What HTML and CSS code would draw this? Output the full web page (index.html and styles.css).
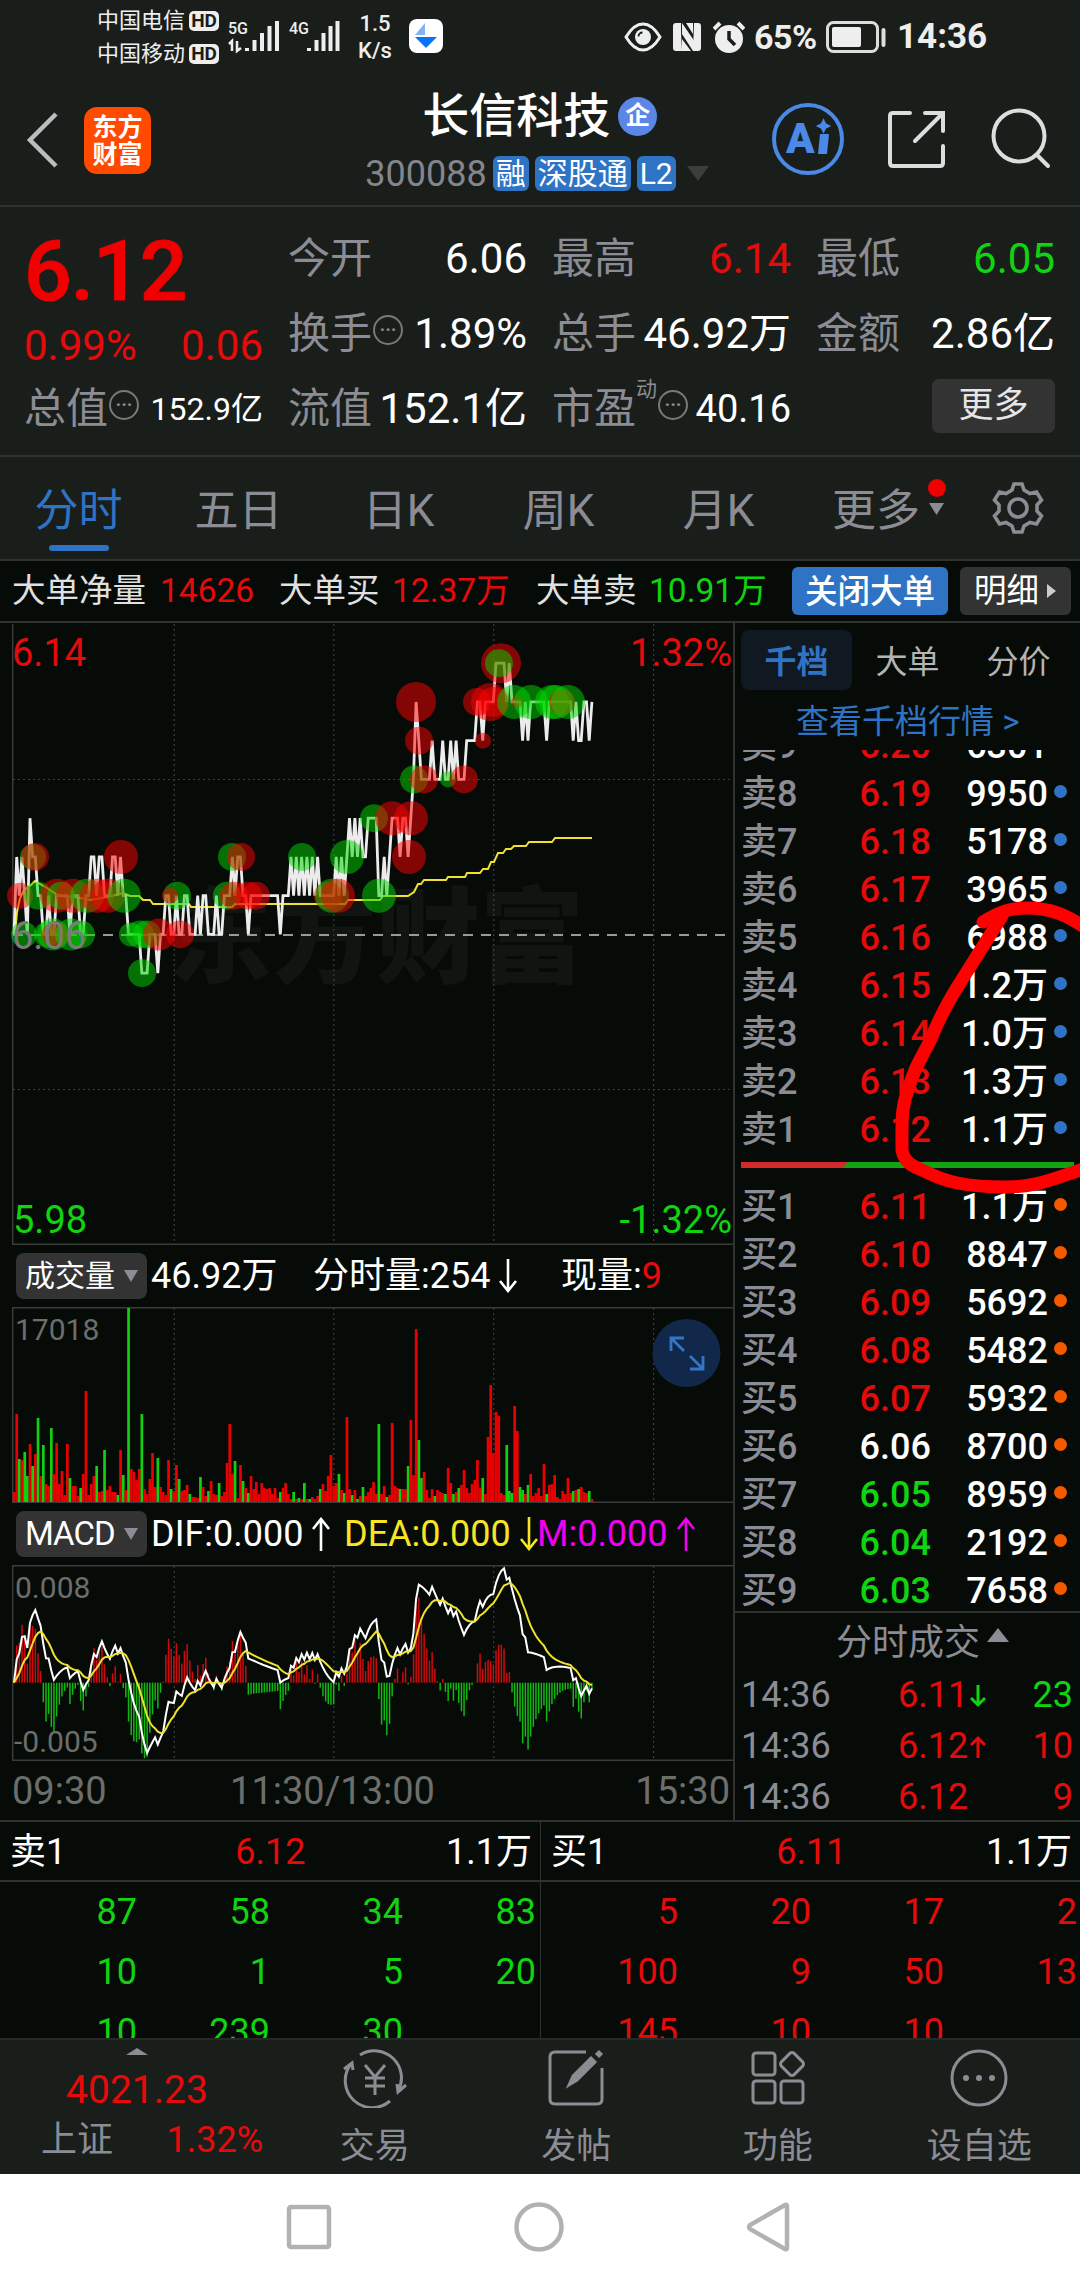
FILE: index.html
```html
<!DOCTYPE html>
<html lang="zh-CN">
<head>
    <meta charset="UTF-8">
    <meta name="viewport" content="width=device-width, initial-scale=1.0">
    <title>长信科技 300088</title>
    <link rel="stylesheet" href="styles.css">
</head>
<body>
<div class="phone">

    <div class="status-bar">
        <div class="carriers">
            <div class="carrier">中国电信<span class="hd">HD</span></div>
            <div class="carrier">中国移动<span class="hd">HD</span></div>
        </div>
        <svg class="signals" width="116" height="40" viewBox="228 18 116 40">
            <text x="228" y="34" class="net">5G</text>
            <text x="289" y="34" class="net">4G</text>
            <path class="sig" d="M247 51v-3M254.500 51v-11M262 51v-18M269.500 51v-25M277 51v-30"/>
            <path class="sig" d="M309 51v-3M316.500 51v-11M323.500 51v-18M330.500 51v-25M337.500 51v-30"/>
            <path class="updown" d="M229 44l3-3v10M237 41v10l4-3"/>
        </svg>
        <div class="speed"><span>1.5</span><span>K/s</span></div>
        <svg class="app-dot" width="34" height="34" viewBox="0 0 34 34">
            <rect width="34" height="34" rx="8" fill="#fff"/>
            <path d="M16 4v12H6z" fill="#7fb4f5"/>
            <path d="M6 18h22L17 29z" fill="#0a73f5"/>
        </svg>
        <div class="status-right">
            <svg width="38" height="30" viewBox="0 0 38 30">
                <path d="M2 15C8 5 14 2 19 2s11 3 17 13c-6 10-12 13-17 13S8 25 2 15z" fill="none" stroke="#eee" stroke-width="3"/>
                <circle cx="19" cy="15" r="8" fill="#eee"/>
                <path d="M14.500 14.500a4 4 0 0 1 4-4" stroke="#1a1e1b" stroke-width="1.800" fill="none"/>
            </svg>
            <svg class="nfc" width="29" height="28" viewBox="0 0 29 28">
                <path d="M3 0h5v9l1 19H3q-3 0-3-3V3q0-3 3-3zM21 0h4q3 0 3 3v22q0 3-3 3h-5z" fill="#eee"/>
                <path d="M9 0l13 19v9h-2L9 11zM9 16l9 12H9zM13 0h7v11z" fill="#eee"/>
            </svg>
            <svg class="alarm" width="32" height="32" viewBox="0 0 32 32">
                <circle cx="16" cy="18" r="14" fill="#eee"/>
                <path d="M1 8l6-6M31 8l-6-6" stroke="#eee" stroke-width="4"/>
                <path d="M16 10v8l6 6" stroke="#1a1e1b" stroke-width="3.500" fill="none"/>
            </svg>
            <span class="percent">65%</span>
            <svg width="60" height="32" viewBox="0 0 60 32">
                <rect x="1.500" y="1.500" width="50" height="29" rx="6" fill="none" stroke="#ddd" stroke-width="3"/>
                <rect x="6" y="6" width="29" height="20" rx="2" fill="#eee"/>
                <path d="M57.500 9v15" stroke="#ddd" stroke-width="4" stroke-linecap="round"/>
            </svg>
            <span class="clock">14:36</span>
        </div>
    </div>

    <div class="title-bar">
        <div class="title-left">
            <svg width="34" height="56" viewBox="0 0 34 56"><path d="M30 2L4 28l26 26" fill="none" stroke="#bdbdbd" stroke-width="4.500"/></svg>
            <div class="logo"><span>东方</span><span>财富</span></div>
        </div>
        <div class="title-mid">
            <div class="name">长信科技<span class="qi">企</span></div>
            <div class="code">300088<span class="tag">融</span><span class="tag">深股通</span><span class="tag">L2</span><i class="caret"></i></div>
        </div>
        <div class="title-right">
            <svg width="72" height="72" viewBox="0 0 72 72">
                <circle cx="36" cy="36" r="34" fill="none" stroke="#4b89e8" stroke-width="4"/>
                <text x="14" y="50" class="ai">A</text>
                <path d="M48 31h9l-2 20h-9z" fill="#4b89e8"/>
                <path d="M51.500 17l2 4 4 2-4 2-2 4-2-4-4-2 4-2z" fill="#4b89e8" stroke="#4b89e8" stroke-width="1.500"/>
            </svg>
            <svg width="60" height="60" viewBox="0 0 60 60" fill="none" stroke="#ddd" stroke-width="4" stroke-linecap="round">
                <path d="M24 4H7Q4 4 4 7v47q0 3 3 3h47q3 0 3-3V37M39 4h18v18M56 5L29 32"/>
            </svg>
            <svg class="search" width="62" height="64" viewBox="0 0 62 64" fill="none" stroke="#ddd" stroke-width="4" stroke-linecap="round">
                <circle cx="29" cy="29" r="25.500"/>
                <path d="M47 48l11 11"/>
            </svg>
        </div>
    </div>

    <div class="quote">
        <div class="price-box">
            <div class="price">6.12</div>
            <div class="change"><span>0.99%</span><span>0.06</span></div>
        </div>
        <div class="cell"><label>今开</label><b>6.06</b></div>
        <div class="cell"><label>最高</label><b class="red">6.14</b></div>
        <div class="cell"><label>最低</label><b class="green">6.05</b></div>
        <div class="cell"><label>换手<i class="more-dot">···</i></label><b>1.89%</b></div>
        <div class="cell"><label>总手</label><b>46.92万</b></div>
        <div class="cell"><label>金额</label><b>2.86亿</b></div>
        <div class="cell"><label>总值<i class="more-dot">···</i></label><b class="small">152.9亿</b></div>
        <div class="cell"><label>流值</label><b>152.1亿</b></div>
        <div class="cell"><label>市盈<sup>动</sup><i class="more-dot">···</i></label><b class="mid">40.16</b></div>
        <div class="cell"><button class="more-btn">更多</button></div>
    </div>

    <div class="tabs">
        <span class="tab active">分时</span>
        <span class="tab">五日</span>
        <span class="tab">日K</span>
        <span class="tab">周K</span>
        <span class="tab">月K</span>
        <span class="tab tab-more">更多
            <svg width="26" height="40" viewBox="0 0 26 40"><circle cx="14" cy="10" r="9" fill="#f00000"/><path d="M6 25h15l-7.500 12z" fill="#8c8c94"/></svg>
        </span>
        <svg class="gear" width="54" height="54" viewBox="0 0 54 54" fill="none" stroke="#8c8c94" stroke-width="3.600">
            <path d="M23 3h8l2 6 6 3.500 6.500-1.500 5 8-4.500 5v6l4.500 5-5 8-6.500-1.500-6 3.500-2 6h-8l-2-6-6-3.500L8.500 43l-5-8L8 30v-6l-4.500-5 5-8 6.500 1.500L21 9z"/>
            <circle cx="27" cy="27" r="9"/>
        </svg>
    </div>

    <div class="big-order">
        <span>大单净量</span><span class="red v1">14626</span>
        <span class="l2">大单买</span><span class="red v2">12.37万</span>
        <span class="l3">大单卖</span><span class="green v3">10.91万</span>
        <span class="btn-blue">关闭大单</span>
        <span class="btn-gray">明细<i class="right-caret"></i></span>
    </div>

    <div class="main">
        <div class="charts">
            <svg id="price-chart" width="734" height="622" viewBox="0 623 734 622"></svg>
            <div class="ind-row">
                <span class="pill">成交量<i></i></span>
                <span class="i1">46.92万</span>
                <span class="i2">分时量:254<svg class="arrow down" viewBox="0 0 18 34"><path d="M9 0v32M1 22l8 10 8-10"/></svg></span>
                <span class="i3">现量:<em>9</em></span>
            </div>
            <svg id="vol-chart" width="734" height="196" viewBox="0 1307 734 196"></svg>
            <div class="ind-row">
                <span class="pill pill-macd">MACD<i></i></span>
                <span class="m1">DIF:0.000<svg class="arrow" viewBox="0 0 18 34"><path d="M9 34V2M1 12L9 2l8 10"/></svg></span>
                <span class="m2 yellow">DEA:0.000<svg class="arrow down" viewBox="0 0 18 34"><path d="M9 0v32M1 22l8 10 8-10"/></svg></span>
                <span class="m3 pink">M:0.000<svg class="arrow" viewBox="0 0 18 34"><path d="M9 34V2M1 12L9 2l8 10"/></svg></span>
            </div>
            <svg id="macd-chart" width="734" height="196" viewBox="0 1565 734 196"></svg>
            <div class="times"><span>09:30</span><span>11:30/13:00</span><span>15:30</span></div>
        </div>

        <div class="side">
            <div class="side-tabs"><span class="on">千档</span><span>大单</span><span>分价</span></div>
            <div class="side-link">查看千档行情 &gt;</div>
            <div class="book sell" id="sell"></div>
            <div class="ratio"><i></i></div>
            <div class="book buy" id="buy"></div>
            <div class="deals">
                <div class="deals-title">分时成交<i></i></div>
                <div class="deal"><span>14:36</span><b>6.11<svg class="green" viewBox="0 0 16 24"><path d="M8 1v20M1 14l7 7 7-7"/></svg></b><em class="green">23</em></div>
                <div class="deal"><span>14:36</span><b>6.12<svg class="red" viewBox="0 0 16 24"><path d="M8 23V3M1 10l7-7 7 7"/></svg></b><em class="red">10</em></div>
                <div class="deal"><span>14:36</span><b>6.12</b><em class="red">9</em></div>
            </div>
        </div>

        <!-- hand-drawn mark over the order book -->
        <svg class="mark" width="190" height="300" viewBox="890 900 190 300">
            <path d="M983 922C1000 911 1012 908 1027 908C1050 908 1066 914 1090 931"/>
            <path d="M1002 916L963 978C948 1001 938 1021 930 1041C920 1060 914 1069 909 1087C901 1107 902 1120 902 1150C904 1162 912 1166 922 1170C945 1182 965 1187 1007 1187C1040 1187 1060 1176 1090 1167"/>
        </svg>
    </div>

    <div class="queue">
        <div class="half">
            <div class="half-head"><span>卖1</span><span class="red">6.12</span><span class="qty">1.1万</span></div>
            <div class="nums green">
                <span>87</span><span>58</span><span>34</span><span>83</span>
                <span>10</span><span>1</span><span>5</span><span>20</span>
                <span>10</span><span>239</span><span>30</span>
            </div>
        </div>
        <div class="half">
            <div class="half-head"><span>买1</span><span class="red">6.11</span><span class="qty">1.1万</span></div>
            <div class="nums red">
                <span>5</span><span>20</span><span>17</span><span>2</span>
                <span>100</span><span>9</span><span>50</span><span>13</span>
                <span>145</span><span>10</span><span>10</span>
            </div>
        </div>
    </div>

    <div class="bottom-bar">
        <div class="index">
            <i class="up"></i>
            <div class="index-value">4021.23</div>
            <div class="index-row"><span>上证</span><span class="red">1.32%</span></div>
        </div>
        <div class="item">
            <svg width="66" height="60" viewBox="0 0 66 60">
                <path d="M18 7a27 27 0 0 1 38 36M48 53A27 27 0 0 1 9 16M2 21l8-6 1 7M64 37l-8 7-1-8"/>
                <path d="M23 17l10 12 10-12M33 29v18M23 30h20M23 38h20"/>
            </svg>
            <span>交易</span>
        </div>
        <div class="item">
            <svg width="60" height="60" viewBox="0 0 60 60">
                <path d="M40 4H9Q4 4 4 9v42q0 5 5 5h42q5 0 5-5V20"/>
                <path d="M23 37l4-9L45 10l4 4-18 18z" fill="#8c8c94"/><path d="M51 8l4-4" stroke-width="6"/>
            </svg>
            <span>发帖</span>
        </div>
        <div class="item">
            <svg width="60" height="60" viewBox="0 0 60 60">
                <rect x="5" y="5" width="22" height="22" rx="3"/><rect x="5" y="33" width="22" height="22" rx="3"/><rect x="33" y="33" width="22" height="22" rx="3"/>
                <rect x="35" y="7" width="18" height="18" rx="3" transform="rotate(45 44 16)"/>
            </svg>
            <span>功能</span>
        </div>
        <div class="item">
            <svg width="60" height="60" viewBox="0 0 60 60">
                <circle cx="30" cy="30" r="27"/>
                <path d="M17 30h.01M30 30h.01M43 30h.01" stroke-width="6" stroke-linecap="round"/>
            </svg>
            <span>设自选</span>
        </div>
    </div>

    <div class="sys-nav">
        <svg width="50" height="54" viewBox="0 0 50 54"><rect x="5" y="7" width="40" height="40" rx="2"/></svg>
        <svg width="54" height="54" viewBox="0 0 54 54"><circle cx="27" cy="27" r="22.500"/></svg>
        <svg width="50" height="54" viewBox="0 0 50 54"><path d="M43 6v42q0 2-2 1L6 29q-2-2 0-4L41 5q2-1 2 1z"/></svg>
    </div>

</div>
<script src="script.js"></script>
</body>
</html>
```

FILE: styles.css
```css
* {
    box-sizing: border-box;
}
body {
    margin: 0;
    background: #060b08;
    font-family: Roboto, "Noto Sans CJK SC", sans-serif;
    color: #fff;
}
.phone {
    width: 1080px;
    height: 2280px;
    overflow: hidden;
}
svg {
    display: block;
    flex: none;
}
i, em {
    font-style: normal;
}
.red { color: #e60b0b; }
.green { color: #10d410; }
.yellow { color: #f7e524; }
.pink { color: #f000f0; }

/* status bar */
.status-bar {
    display: flex;
    height: 75px;
    padding-left: 97px;
    background: #1a1e1b;
    color: #eee;
}
.carriers {
    width: 131px;
    padding-top: 4px;
}
.carrier {
    display: flex;
    align-items: center;
    height: 33px;
    font-size: 22px;
    line-height: 33px;
    white-space: nowrap;
}
.hd {
    width: 30px;
    height: 20px;
    margin-left: 4px;
    border-radius: 5px;
    background: #eee;
    color: #1a1e1b;
    font-size: 19px;
    font-weight: 700;
    line-height: 20px;
    text-align: center;
}
.signals {
    margin-top: 18px;
}
.net {
    font-size: 16px;
    font-weight: 500;
    fill: #eee;
}
.sig {
    stroke: #eee;
    stroke-width: 4;
}
.updown {
    fill: none;
    stroke: #eee;
    stroke-width: 2.5;
}
.speed {
    display: flex;
    flex-direction: column;
    width: 65px;
    padding-top: 10px;
    padding-right: 3px;
    font-size: 22px;
    font-weight: 500;
    line-height: 27px;
    text-align: center;
}
.app-dot {
    margin-top: 19px;
}
.status-right {
    display: flex;
    align-items: center;
    height: 73px;
    margin-left: 181px;
    font-weight: 700;
}
.nfc { margin-left: 11px; }
.alarm { margin-left: 11px; }
.percent {
    width: 72px;
    margin-left: 9px;
    font-size: 34px;
    letter-spacing: -0.5px;
}
.clock {
    margin-left: 11px;
    font-size: 35px;
}

/* title */
.title-bar {
    display: flex;
    justify-content: space-between;
    height: 132px;
    padding: 0 28px 0 26px;
    background: #1a1e1b;
    border-bottom: 2px solid #30322f;
}
.title-left {
    display: flex;
    align-items: center;
    width: 320px;
}
.logo {
    display: flex;
    flex-direction: column;
    width: 67px;
    height: 67px;
    margin-left: 24px;
    padding-top: 7px;
    border-radius: 13px;
    background: #ff4a00;
    font-size: 25px;
    font-weight: 700;
    line-height: 27px;
    text-align: center;
}
.title-mid {
    margin-left: -44px;
    padding-top: 15px;
}
.name {
    display: flex;
    align-items: center;
    height: 52px;
    padding-left: 57px;
    font-size: 47px;
    font-weight: 500;
    line-height: 52px;
}
.qi {
    width: 39px;
    height: 39px;
    margin-left: 8px;
    border-radius: 50%;
    background: #5a86e6;
    font-size: 25px;
    font-weight: 700;
    line-height: 38px;
    text-align: center;
}
.code {
    display: flex;
    align-items: center;
    height: 63px;
    color: #85858d;
    font-size: 36px;
}
.tag {
    height: 35px;
    margin-left: 6px;
    padding: 0 3px;
    border-radius: 6px;
    background: #2f74c4;
    color: #fff;
    font-size: 30px;
    line-height: 35px;
}
.caret {
    margin-left: 11px;
    border: 11px solid transparent;
    border-top: 15px solid #3c3e3c;
    border-bottom: 0;
}
.title-right {
    display: flex;
    align-items: center;
    gap: 42px;
    height: 128px;
}
.search {
    margin-left: 2px;
}
.ai {
    font-size: 42px;
    font-weight: 900;
    fill: #4b89e8;
}

/* quote */
.quote {
    display: grid;
    grid-template-columns: repeat(4, 239px);
    grid-auto-rows: 75px;
    column-gap: 25px;
    height: 250px;
    padding: 14px 0 0 24px;
    background: #1a1e1b;
    border-bottom: 2px solid #30322f;
}
.price-box {
    grid-row: span 2;
}
.price {
    height: 97px;
    padding-top: 2px;
    font-size: 84px;
    font-weight: 500;
    line-height: 97px;
    letter-spacing: -1px;
    color: #f00000;
    -webkit-text-stroke: 1px #f00000;
}
.change {
    display: flex;
    justify-content: space-between;
    padding-top: 1px;
    font-size: 42px;
    line-height: 54px;
    color: #e60b0b;
}
.cell {
    display: flex;
    align-items: center;
    justify-content: space-between;
    white-space: nowrap;
    font-size: 42px;
}
.cell label {
    display: flex;
    align-items: center;
    color: #8c8c94;
    line-height: 60px;
}
.cell b {
    font-weight: 400;
    line-height: 60px;
}
.cell .small { font-size: 32px; }
.cell .mid { font-size: 38px; }
.cell sup {
    width: 21px;
    font-size: 21px;
    line-height: 21px;
    margin-bottom: 38px;
}
.more-dot {
    width: 30px;
    height: 30px;
    margin: 0 0 8px 1px;
    border: 2px solid #777b78;
    border-radius: 50%;
    font-size: 19px;
    font-weight: 700;
    line-height: 26px;
    text-align: center;
}
.more-btn {
    width: 123px;
    height: 54px;
    margin: 0 0 5px auto;
    padding: 0;
    border: 0;
    border-radius: 7px;
    background: #333;
    color: #e6e6e6;
    font: 35px/54px Roboto, "Noto Sans CJK SC", sans-serif;
}

/* period tabs */
.tabs {
    display: flex;
    height: 104px;
    background: #1a1e1b;
    border-bottom: 2px solid #30322f;
}
.tab {
    position: relative;
    width: 160px;
    padding-right: 3px;
    color: #8c8c94;
    font-size: 44px;
    line-height: 108px;
    text-align: center;
}
.active {
    color: #2f74c4;
}
.active::after {
    content: "";
    position: absolute;
    left: 49px;
    bottom: 8px;
    width: 60px;
    height: 6px;
    border-radius: 3px;
    background: #2f74c4;
}
.tab-more {
    display: flex;
    padding-left: 32px;
}
.tab-more svg {
    margin: 21px 0 0 3px;
}
.gear {
    margin: 24px 0 0 31px;
}

/* big orders */
.big-order {
    display: flex;
    align-items: center;
    height: 62px;
    padding-left: 12px;
    border-bottom: 2px solid #30322f;
    color: #e0e0e0;
    font-size: 33.5px;
    line-height: 50px;
    white-space: nowrap;
}
.v1 { margin-left: 14px; width: 119px; }
.l2 { width: 100px; }
.v2, .v3 { margin-left: 13px; }
.v2 { width: 144px; }
.l3 { width: 100px; }
.v3 { width: 143px; }
.btn-blue, .btn-gray {
    height: 48px;
    border-radius: 6px;
    background: #2f74c4;
    color: #fff;
    font-size: 32.5px;
    text-align: center;
}
.btn-blue {
    width: 156px;
    font-weight: 500;
}
.btn-gray {
    display: flex;
    align-items: center;
    width: 111px;
    margin-left: 12px;
    padding-left: 14px;
    background: #333;
}
.right-caret {
    margin-left: 8px;
    border: 7px solid transparent;
    border-left: 9px solid #ccc;
    border-right: 0;
}

/* charts */
.main {
    position: relative;
    display: flex;
    height: 1199px;
    border-bottom: 2px solid #30322f;
    overflow: hidden;
}
.charts {
    width: 735px;
    border-right: 2px solid #30322f;
}
.frame {
    fill: none;
    stroke: #3a3c3a;
    stroke-width: 1.5;
}
.grid {
    stroke: #3c3e3c;
    stroke-width: 1.2;
    stroke-dasharray: 2 3;
}
.zero {
    stroke: #9a9a9a;
    stroke-width: 2;
    stroke-dasharray: 10 8;
}
.watermark {
    font-size: 104px;
    font-weight: 900;
    fill: #111512;
}
.line {
    fill: none;
    stroke: #ececec;
    stroke-width: 2.8;
}
.avg {
    fill: none;
    stroke: #f0e030;
    stroke-width: 2;
}
.buy-dot { fill: rgba(255, 0, 0, .5); }
.sell-dot { fill: rgba(0, 215, 0, .5); }
.axis {
    font-size: 38px;
}
.axis-small {
    font-size: 30px;
    fill: #6c6e6c;
}
.fill-red { fill: #e60b0b; }
.fill-green { fill: #10d410; }
.fill-gray { fill: #7a7c7a; }
.bar-up { fill: #ea0000; }
.bar-down { fill: #10d010; }
.hist-up { fill: #d00a0a; }
.hist-down { fill: #10b810; }
.thin { stroke-width: 2; stroke: #fff; }
.ind-row {
    display: flex;
    align-items: center;
    height: 62px;
    padding-left: 16px;
    font-size: 36px;
    line-height: 60px;
    white-space: nowrap;
}
.ind-row span {
    display: flex;
    align-items: center;
}
.ind-row .pill {
    width: 131px;
    height: 46px;
    padding-left: 9px;
    border-radius: 8px;
    background: #333;
    font-size: 30px;
}
.ind-row .pill-macd {
    font-size: 33px;
    letter-spacing: -1px;
}
.pill i {
    margin-left: auto;
    margin-right: 9px;
    border: 7px solid transparent;
    border-top: 12px solid #8c8c94;
    border-bottom: 0;
}
.i1 {
    width: 166px;
    padding-left: 4px;
}
.i2 { width: 248px; }
.i3 em { color: #e60b0b; }
.m1 {
    width: 197px;
    padding-left: 4px;
}
.m2 {
    width: 193px;
}
.arrow {
    width: 18px;
    height: 34px;
    margin-left: 9px;
    fill: none;
    stroke: currentColor;
    stroke-width: 2.6;
}
.times {
    display: flex;
    justify-content: space-between;
    padding: 0 3px 0 12px;
    color: #6c6e6c;
    font-size: 38px;
    line-height: 61px;
}
.times span:nth-child(2) {
    margin-right: 77px;
}

/* order book */
.side {
    width: 345px;
}
.side-tabs {
    display: flex;
    height: 67px;
    padding: 7px 0 0 6px;
    color: #b4b4b4;
    font-size: 32px;
    line-height: 64px;
    text-align: center;
}
.side-tabs span {
    width: 111px;
}
.side-tabs .on {
    border-radius: 8px;
    background: #101822;
    color: #2f74c4;
    font-weight: 700;
}
.side-link {
    height: 60px;
    padding-left: 61px;
    color: #2f74c4;
    font-size: 33px;
    line-height: 64px;
    white-space: nowrap;
}
.book {
    display: flex;
    flex-direction: column;
    overflow: hidden;
}
.sell {
    height: 404px;
    justify-content: flex-end;
}
.buy {
    height: 428px;
    margin-top: 15px;
}
.level {
    display: flex;
    flex: none;
    align-items: center;
    height: 48px;
    padding-left: 6px;
    font-size: 36px;
    font-weight: 500;
    line-height: 48px;
}
.level span {
    width: 77px;
    color: #8c8c94;
}
.level b, .level em {
    width: 113px;
    font-weight: 500;
    text-align: right;
}
.level em {
    width: 117px;
}
.level i {
    width: 13px;
    height: 13px;
    margin: 0 0 5px 6px;
    border-radius: 50%;
    background: #2f74c4;
}
.buy i {
    background: #f05a00;
}
.ratio {
    width: 333px;
    height: 6px;
    margin: 8px 0 0 6px;
    background: #12a212;
}
.ratio i {
    display: block;
    width: 107px;
    height: 6px;
    background: #d02a2a;
    clip-path: polygon(0 0, 100% 0, 95% 100%, 0 100%);
}
.deals {
    border-top: 2px solid #30322f;
}
.deals-title {
    display: flex;
    align-items: center;
    height: 57px;
    padding: 0 0 5px 101px;
    color: #8c8c94;
    font-size: 36px;
}
.deals-title i {
    margin: 0 0 8px 7px;
    border: 11px solid transparent;
    border-bottom: 14px solid #8c8c94;
    border-top: 0;
}
.deal {
    display: flex;
    height: 51px;
    padding: 0 7px 0 6px;
    font-size: 36px;
    line-height: 51px;
}
.deal span {
    width: 157px;
    color: #8c8c94;
}
.deal b {
    display: flex;
    align-items: center;
    color: #e60b0b;
    font-weight: 400;
}
.deal b svg {
    width: 16px;
    height: 24px;
    margin-left: 2px;
    fill: none;
    stroke: currentColor;
    stroke-width: 3;
}
.deal em {
    margin-left: auto;
}
.mark {
    position: absolute;
    left: 890px;
    top: 277px;
    fill: none;
    stroke: #ff0000;
    stroke-width: 13;
    stroke-linecap: round;
}

/* order queue */
.queue {
    display: flex;
    height: 216px;
}
.half {
    width: 540px;
    overflow: hidden;
    font-size: 36px;
    line-height: 60px;
}
.half + .half {
    border-left: 1px solid #30322f;
}
.half-head {
    display: flex;
    height: 60px;
    padding: 0 8px 0 10px;
    border-bottom: 2px solid #30322f;
}
.half-head .red {
    margin-left: 169px;
}
.qty {
    margin-left: auto;
}
.nums {
    display: grid;
    grid-template-columns: repeat(4, 133px);
    grid-auto-rows: 60px;
    padding-left: 4px;
    text-align: right;
}

/* bottom bar */
.bottom-bar {
    display: flex;
    height: 136px;
    background: #1a1e1b;
    border-top: 2px solid #262a27;
}
.index {
    display: flex;
    flex-direction: column;
    align-items: center;
    width: 274px;
    padding-top: 8px;
}
.up {
    border: 11px solid transparent;
    border-bottom: 7px solid #8c8c94;
    border-top: 0;
}
.index-value {
    color: #e60b0b;
    font-size: 39px;
    line-height: 70px;
}
.index-row {
    display: flex;
    justify-content: space-between;
    width: 222px;
    margin-left: 30px;
    font-size: 36px;
    line-height: 30px;
    color: #8c8c94;
}
.index-row .red {
    color: #e60b0b;
}
.item {
    display: flex;
    flex-direction: column;
    align-items: center;
    width: 201.5px;
    padding-top: 8px;
    color: #8c8c94;
    font-size: 35px;
    line-height: 78px;
}
.item svg {
    fill: none;
    stroke: #8c8c94;
    stroke-width: 3;
}
.sys-nav {
    display: flex;
    align-items: center;
    justify-content: space-between;
    height: 106px;
    padding: 0 286px 0 284px;
    background: #fff;
}
.sys-nav svg {
    fill: none;
    stroke: #b2b2b2;
    stroke-width: 4.5;
}
```

FILE: script.js
```javascript
const STEP = 2.663;
const LEFT = 14;
const MINUTES = 218;

// [minute, level], level 0 = 6.05, one level = 0.01
const ticks = [
    [0,1],[1,3],[2,2],[3,3],[4,2],[5,1],[6,4],[7,3],[8,3],[9,2],[10,2],[11,1],[12,1],[13,2],[14,1],[15,1],[16,2],[20,2],
    [21,1],[22,2],[24,2],[25,1],[26,1],[27,2],[28,2],[29,3],[30,3],[31,2],[32,3],[33,3],[34,2],[36,2],[37,3],[38,3],[39,2],[40,3],
    [41,2],[42,2],[43,1],[47,1],[48,0],[50,0],[51,1],[53,1],[54,0],[55,1],[56,1],[57,2],[58,2],[59,1],[60,1],[61,2],
    [62,1],[63,1],[64,2],[65,2],[66,1],[68,1],[69,2],[70,1],[71,2],[72,2],[73,1],[75,1],[76,2],[77,1],[78,1],[79,2],
    [81,2],[82,3],[83,2],[84,3],[85,3],[86,2],[87,2],[88,1],[89,2],[99,2],[100,1],[101,2],[103,2],[104,3],[105,2],
    [106,3],[107,2],[108,3],[109,2],[110,3],[111,2],[112,3],[113,2],[114,3],[115,2],[120,2],[121,3],[122,2],[123,3],
    [124,2],[125,3],[126,4],[127,3],[128,4],[129,3],[130,4],[131,3],[132,3],[133,4],[136,4],[137,2],[138,2],[139,3],
    [140,2],[141,3],[142,4],[144,4],[145,3],[146,4],[147,4],[148,3],[149,4],[150,5],[151,7],[152,6],[153,5],[156,5],
    [157,6],[158,5],[160,5],[161,6],[162,5],[163,5],[164,6],[165,5],[166,6],[167,5],[169,5],[170,6],[173,6],[174,7],
    [175,7],[176,6],[177,7],[180,7],[181,8],[184,8],[185,7],[186,8],[187,7],[190,7],[191,6],[192,7],[193,6],[194,7],
    [199,7],[200,6],[201,7],[209,7],[210,6],[211,7],[212,6],[213,6],[214,7],[215,7],[216,6],[217,7]
];

// average price, [x, y]
const avg = "15,934 17,912 20,898 24,890 31,885 35,881 40,884 47,888 53,892 59,896 75,897 90,900 108,897 123,893 130,896 139,896 143,900 150,900 153,904 189,904 191,907 232,907 235,904 345,904 348,900 380,900 383,896 408,896 414,892 418,884 421,884 424,880 446,880 448,877 465,877 467,873 480,873 483,869 488,869 491,862 494,862 498,853 503,853 506,849 511,849 514,846 526,846 529,842 552,842 555,838 592,838";

// big orders: [x, level, radius, 1 buy / 0 sell]
const dots = [
    [20,2,13,1],[33,3,13,0],[35,3,14,1],[38,2,14,0],[57,2,17,1],[61,2,14,0],[73,2,17,1],[87,2,17,0],[97,2,17,1],[108,2,17,1],
    [124,2,17,0],[121,3,17,1],[24,1,13,0],[47,1,13,0],[53,1,16,0],[55,1,13,1],[71,1,16,0],[81,1,14,0],[131,1,12,0],
    [140,1,14,0],[147,1,14,0],[159,1,16,1],[180,1,14,1],[177,2,14,0],[170,2,8,1],[142,0,14,0],[227,2,14,0],[234,2,14,1],
    [248,2,14,1],[256,2,14,1],[232,3,14,0],[241,3,14,1],[302,3,14,0],[328,2,14,1],[332,2,17,0],[338,2,17,1],[347,3,17,0],
    [379,2,17,0],[374,4,14,0],[392,4,17,1],[411,4,17,1],[409,3,17,1],[414,5,14,0],[424,5,14,1],[448,5,8,0],[464,5,14,1],
    [419,6,14,1],[416,7,20,1],[483,6,8,1],[477,7,14,1],[490,7,19,1],[493,7,15,1],[501,8,20,1],[499,8,14,0],
    [514,7,17,0],[517,7,6,1],[531,7,17,0],[552,7,17,0],[556,7,17,0],[562,7,13,1],[568,7,17,0]
];

// minute volume in px, negative = falling
const volume = [
    10,88,-43,42,-50,-26,58,-36,48,-84,26,-57,18,16,-74,28,59,18,31,7,58,-24,16,16,6,-14,28,111,7,18,26,-36,10,11,-52,12,16,
    10,10,-7,52,-27,12,-194,33,30,22,33,-88,13,8,23,49,15,-44,15,10,7,42,-13,11,37,-23,11,12,17,-8,5,5,4,-25,15,6,-11,21,8,7,
    -19,6,10,39,78,28,-41,4,37,-21,14,-9,26,13,20,8,19,14,13,14,8,14,4,-10,14,19,8,3,-10,3,-4,3,-19,3,-3,5,3,6,-13,18,11,26,
    47,16,19,-28,12,-9,85,13,-7,12,-3,6,-15,6,10,14,20,8,-78,8,16,-5,7,79,16,14,-13,13,13,-36,82,27,173,-62,-24,30,12,4,13,
    -6,12,10,9,-8,34,19,-8,10,-14,17,32,14,9,18,22,42,14,-24,8,65,117,49,90,86,9,7,-57,-11,-9,96,71,-15,-12,8,-17,28,6,9,14,6,
    38,-8,17,18,27,5,3,11,8,24,9,-11,12,-13,15,10,9,-11,3
];

function px(i) {
    return LEFT + i * STEP;
}

function levelY(level) {
    return 973.2 - level * 38.75;
}

function gridLines(top, bottom) {
    return [174.3, 333.8, 493.7, 653.6].map(x => `<path class="grid" d="M${x} ${top}V${bottom}"/>`).join("");
}

function drawPrice() {
    let line = ticks.map(t => px(t[0]).toFixed(1) + "," + levelY(t[1])).join(" ");
    let circles = dots.map(d => `<circle class="${d[3] ? 'buy-dot' : 'sell-dot'}" cx="${d[0]}" cy="${levelY(d[1])}" r="${d[2]}"/>`).join("");
    document.getElementById("price-chart").innerHTML = `
        <text class="watermark" x="168" y="975">东方财富</text>
        ${gridLines(624, 1244)}
        <path class="grid" d="M13 779.5H733M13 1089.5H733"/>
        <path class="frame" d="M12.700 624V1244.300H733"/>
        <path class="zero" d="M13 935H733"/>
        <polyline class="avg" points="${avg}"/>
        <polyline class="line" points="${line}"/>
        ${circles}
        <text class="axis fill-red" x="12" y="666">6.14</text>
        <text class="axis fill-red" x="732" y="666" text-anchor="end">1.32%</text>
        <text class="axis fill-gray" x="12" y="949">6.06</text>
        <text class="axis fill-green" x="13" y="1233">5.98</text>
        <text class="axis fill-green" x="732" y="1233" text-anchor="end">-1.32%</text>`;
}

function drawVolume() {
    let bars = volume.map((v, i) =>
        `<rect class="${v > 0 ? 'bar-up' : 'bar-down'}" x="${(px(i) - 1.3).toFixed(1)}" y="${1502 - Math.abs(v)}" width="2.7" height="${Math.abs(v)}"/>`
    ).join("");
    document.getElementById("vol-chart").innerHTML = `
        ${gridLines(1308, 1502)}
        <path class="frame" d="M733 1307.700H12.700V1502.300H733"/>
        ${bars}
        <text class="axis-small" x="15" y="1340">17018</text>
        <circle cx="686.500" cy="1353" r="34" fill="#12284a"/>
        <path d="M671 1351v-13h13M672 1339l12 12M703 1356v13h-13M702 1368l-12-12" fill="none" stroke="#3376c8" stroke-width="2.800"/>`;
}

function drawMacd() {
    let prices = [];
    for (let k = 0; k < ticks.length; k++) {
        let next = ticks[k + 1];
        prices.push(ticks[k][1]);
        for (let i = ticks[k][0] + 1; next && i < next[0]; i++) {
            prices.push(ticks[k][1]);
        }
    }
    let fast = prices[0], slow = prices[0], dea = 0;
    let dif = [], deaLine = [], bars = "";
    const zero = 1682.7, scale = 145.8;
    for (let i = 0; i < MINUTES; i++) {
        fast += (prices[i] - fast) * 2 / 13;
        slow += (prices[i] - slow) * 2 / 27;
        let d = fast - slow;
        dea += (d - dea) * 0.2;
        dif.push(px(i).toFixed(1) + "," + (zero - d * scale).toFixed(1));
        deaLine.push(px(i).toFixed(1) + "," + (zero - dea * scale).toFixed(1));
        let h = (d - dea) * 2 * scale;
        bars += `<rect class="${h > 0 ? 'hist-up' : 'hist-down'}" x="${(px(i) - 0.7).toFixed(1)}" y="${h > 0 ? zero - h : zero}" width="1.5" height="${Math.abs(h)}"/>`;
    }
    document.getElementById("macd-chart").innerHTML = `
        ${gridLines(1566, 1760)}
        <path class="frame" d="M733 1565.700H12.700V1760.200H733"/>
        ${bars}
        <polyline class="line thin" points="${dif.join(" ")}"/>
        <polyline class="avg" points="${deaLine.join(" ")}"/>
        <text class="axis-small" x="15" y="1598">0.008</text>
        <text class="axis-small" x="14" y="1752">-0.005</text>`;
}

const sell = [["卖9","6.20","6301"],["卖8","6.19","9950"],["卖7","6.18","5178"],["卖6","6.17","3965"],["卖5","6.16","6988"],
    ["卖4","6.15","1.2万"],["卖3","6.14","1.0万"],["卖2","6.13","1.3万"],["卖1","6.12","1.1万"]];
const buy = [["买1","6.11","1.1万"],["买2","6.10","8847"],["买3","6.09","5692"],["买4","6.08","5482"],["买5","6.07","5932"],
    ["买6","6.06","8700"],["买7","6.05","8959"],["买8","6.04","2192"],["买9","6.03","7658"]];

function renderBook(id, rows) {
    document.getElementById(id).innerHTML = rows.map(r => {
        let p = parseFloat(r[1]);
        let color = p > 6.06 ? "red" : p < 6.06 ? "green" : "";
        return `<div class="level"><span>${r[0]}</span><b class="${color}">${r[1]}</b><em>${r[2]}</em><i></i></div>`;
    }).join("");
}

drawPrice();
drawVolume();
drawMacd();
renderBook("sell", sell);
renderBook("buy", buy);
```
